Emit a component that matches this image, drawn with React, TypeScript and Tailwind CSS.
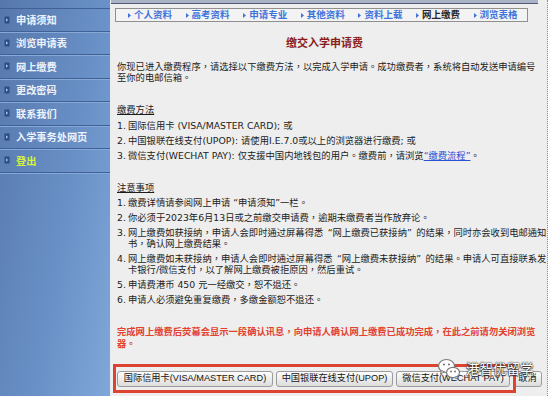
import React from "react";

const menu = ["申请须知", "浏览申请表", "网上缴费", "更改密码", "联系我们", "入学事务处网页", "登出"];

const tabs = ["个人资料", "高考资料", "申请专业", "其他资料", "资料上载", "网上缴费", "浏览表格"];

const body = { fontFamily: '"DejaVu Sans", "Noto Sans CJK TC", sans-serif' };
const cjk = { fontFamily: '"Noto Sans CJK SC", sans-serif' };
const btn = { fontFamily: '"Liberation Sans", "Noto Sans CJK SC", sans-serif' };

function Q({ c, open }: { c: string; open?: boolean }) {
    return (
        <span className={`inline-block w-[9.3px] ${open ? "text-right" : "text-left"}`}>{c}</span>
    );
}

function Item({ n, children }: { n: number; children: React.ReactNode }) {
    return (
        <div className="flex leading-[11px] mb-[4px]">
            <span className="w-[11px] shrink-0">{n}.</span>
            <span className="flex-1">{children}</span>
        </div>
    );
}

export default function App() {
    return (
        <div className="relative flex w-[549px] h-[396px] overflow-hidden bg-white">
            {/* Sidebar */}
            <div className="w-[110px] shrink-0 pt-[8px] bg-[linear-gradient(100deg,#5677ac_0%,#6a92c8_60%,#7fa7d8_100%)]">
                {menu.map((m, i) => (
                    <div
                        key={m}
                        className={`flex items-center h-[23.5px] pl-[4px] border-b border-[#3f6197] shadow-[0_1px_0_#86a9d8] ${i === 0 ? "border-t" : ""}`}
                    >
                        <svg width="6" height="8" viewBox="0 0 6 8" className="mr-[6px]">
                            <rect x="0" y="0" width="6" height="8" fill="#2d4c82" stroke="#7d9dcc" strokeWidth="0.6" />
                            <path d="M2 2.2 L4.2 4 L2 5.8 Z" fill="#9fc0ea" />
                        </svg>
                        <span
                            className={`text-[10.2px] font-bold ${i === 6 ? "text-[#d6f23c]" : "text-[#eef3fb]"}`}
                            style={cjk}
                        >
                            {m}
                        </span>
                    </div>
                ))}
            </div>

            {/* Main */}
            <div className="flex-1 flex flex-col bg-[#eeeeee] border-l border-[#e3eaf4] border-r border-dotted border-r-[#8c8c8c] mr-[1px]" style={body}>
                <div className="w-[427px] h-[4px] bg-[#aab4c6] border-b border-[#4d5b78]" />

                {/* Tabs */}
                <div className="ml-[4px] mt-[4px] w-[413px] h-[14px] flex items-center pl-[12px] border border-[#8f8f8f] bg-[#f3f3f3]">
                    {tabs.map((t) => (
                        <div key={t} className="w-[57.6px] shrink-0 flex items-center">
                            <svg width="3" height="5" viewBox="0 0 3 5" className="mr-[3px]">
                                <path d="M0 0 L3 2.5 L0 5 Z" fill="#3f72d6" />
                            </svg>
                            <span
                                className={`text-[9.5px] font-bold leading-none ${t === "网上缴费" ? "text-[#262626]" : "text-[#3d74db]"}`}
                                style={cjk}
                            >
                                {t}
                            </span>
                        </div>
                    ))}
                </div>

                <div className="mt-[13px] w-[427px] text-center text-[11px] leading-[14px] font-bold text-[#8b1c1c]" style={cjk}>
                    缴交入学申请费
                </div>

                <div className="pl-[6px] w-[430px] text-[9.3px] text-[#1c1c1c] whitespace-nowrap">
                    <p className="mt-[12px] leading-[11px]">
                        你现已进入缴费程序，请选择以下缴费方法，以完成入学申请。成功缴费者，系统将自动发送申请编号
                        <br />
                        至你的电邮信箱。
                    </p>

                    <p className="mt-[21px] leading-[11px] underline">缴费方法</p>
                    <div className="mt-[5px]">
                        <Item n={1}>国际信用卡 (VISA/MASTER CARD); 或</Item>
                        <Item n={2}>中国银联在线支付(UPOP): 请使用I.E.7.0或以上的浏览器进行缴费; 或</Item>
                        <Item n={3}>
                            微信支付(WECHAT PAY): 仅支援中国内地钱包的用户。缴费前，请浏览
                            <span className="text-[#2a50d4] underline">“缴费流程”</span>。
                        </Item>
                    </div>

                    <p className="mt-[21px] leading-[11px] underline">注意事项</p>
                    <div className="mt-[4px]">
                        <Item n={1}>缴费详情请参阅网上申请 “申请须知”一栏。</Item>
                        <Item n={2}>你必须于2023年6月13日或之前缴交申请费，逾期未缴费者当作放弃论。</Item>
                        <Item n={3}>
                            网上缴费如获接纳，申请人会即时通过屏幕得悉<Q c="“" open />网上缴费已获接纳<Q c="”" />的结果，同时亦会收到电邮通知
                            <br />
                            书，确认网上缴费结果。
                        </Item>
                        <Item n={4}>
                            网上缴费如未获接纳，申请人会即时通过屏幕得悉<Q c="“" open />网上缴费未获接纳<Q c="”" />的结果。申请人可直接联系发
                            <br />
                            卡银行/微信支付，以了解网上缴费被拒原因，然后重试。
                        </Item>
                        <Item n={5}>申请费港币 450 元一经缴交，恕不退还。</Item>
                        <Item n={6}>申请人必须避免重复缴费，多缴金额恕不退还。</Item>
                    </div>

                    <p className="mt-[21px] leading-[11.5px] font-semibold text-[#e3402d]">
                        完成网上缴费后荧幕会显示一段确认讯息，向申请人确认网上缴费已成功完成，在此之前请勿关闭浏览
                        <br />
                        器。
                    </p>
                </div>

                {/* Buttons */}
                <div className="relative mt-[22px] pl-[6px] flex gap-[3px]" style={btn}>
                    {["国际信用卡(VISA/MASTER CARD)", "中国银联在线支付(UPOP)", "微信支付(WECHAT PAY)", "取消"].map((b, i) => (
                        <button
                            key={b}
                            className={`h-[16px] shrink-0 rounded-[3px] border border-[#9c9c9c] bg-[linear-gradient(#fdfdfd,#dcdcdc)] text-[9.2px] text-[#151515] leading-none ${
                                ["w-[156px]", "w-[117px]", "w-[114px]", "w-[29px]"][i]
                            }`}
                        >
                            {b}
                        </button>
                    ))}
                    <div className="absolute left-[2px] top-[-7px] w-[403px] h-[29px] border-[3px] border-[#dc4431] pointer-events-none" />
                </div>
            </div>

            {/* Watermark */}
            <div className="absolute left-[437px] top-[357px] flex items-center gap-[5px] pointer-events-none">
                <svg width="24" height="24" viewBox="0 0 24 24">
                    <ellipse cx="9.5" cy="9" rx="8" ry="6.5" fill="white" stroke="#7a7a7a" strokeWidth="1.2" />
                    <path d="M4.5 13.5 L3.5 17 L7.5 14.8 Z" fill="white" stroke="#7a7a7a" strokeWidth="1" />
                    <circle cx="7" cy="7.5" r="1" fill="#6a6a6a" />
                    <circle cx="12" cy="7.5" r="1" fill="#6a6a6a" />
                    <ellipse cx="16" cy="15.5" rx="6.5" ry="5.2" fill="white" stroke="#7a7a7a" strokeWidth="1.2" />
                    <path d="M19.5 19.5 L21 22.5 L17.5 20.5 Z" fill="white" stroke="#7a7a7a" strokeWidth="1" />
                    <circle cx="14" cy="14.5" r="0.9" fill="#6a6a6a" />
                    <circle cx="18" cy="14.5" r="0.9" fill="#6a6a6a" />
                </svg>
                <span
                    className="text-[13.5px] leading-none text-white [text-shadow:0_0_2px_#222,0_0_1px_#222,0_1px_1px_#333]"
                    style={cjk}
                >
                    港智优留学
                </span>
            </div>
        </div>
    );
}
